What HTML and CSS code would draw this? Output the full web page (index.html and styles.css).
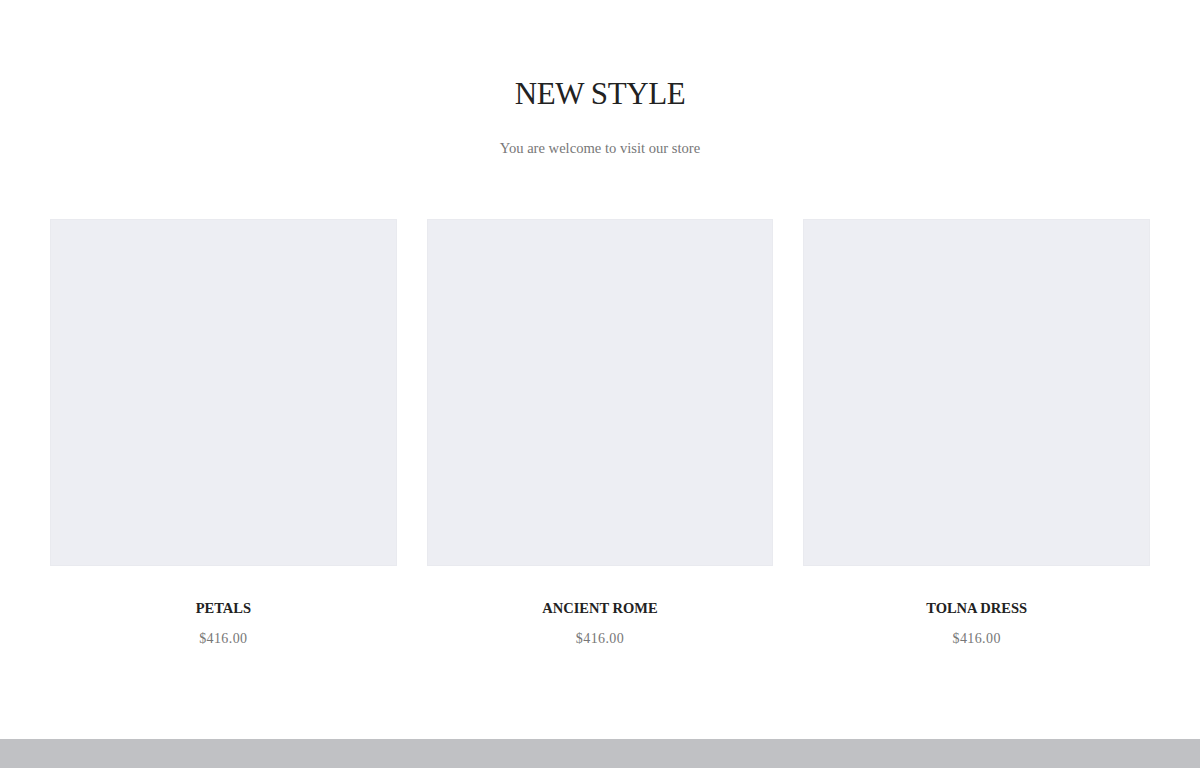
FILE: index.html
```html
<!DOCTYPE html>
<html lang="en">
<head>
  <meta charset="UTF-8">
  <title>New Style</title>
  <meta name="viewport" content="width=device-width, initial-scale=1">
  <link rel="stylesheet" href="styles.css">
</head>
<body>
  <section class="collection">
    <div class="collection-head">
      <h2>NEW STYLE</h2>
      <p>You are welcome to visit our store</p>
    </div>

    <div class="product-grid">
      <div class="product">
        <div class="product-img"></div>
        <h3>PETALS</h3>
        <span class="price">$416.00</span>
      </div>
      <div class="product">
        <div class="product-img"></div>
        <h3>ANCIENT ROME</h3>
        <span class="price">$416.00</span>
      </div>
      <div class="product">
        <div class="product-img"></div>
        <h3>TOLNA DRESS</h3>
        <span class="price">$416.00</span>
      </div>
    </div>
  </section>

  <footer class="site-footer"></footer>
</body>
</html>
```

FILE: styles.css
```css
* {
  box-sizing: border-box;
  font-family: 'Liberation Serif', 'Times New Roman', serif;
}
body {
  margin: 0;
  padding: 0;
  background: #fff;
  color: #222;
}
.collection {
  padding: 76px 50px 0;
  height: 739px;
}
.collection-head {
  text-align: center;
}
.collection-head h2 {
  margin: 0;
  font-size: 31px;
  font-weight: normal;
  line-height: 36px;
  letter-spacing: -0.4px;
  color: #222;
}
.collection-head p {
  margin: 26px 0 0;
  font-size: 14.6px;
  line-height: 20px;
  color: #777;
}
.product-grid {
  display: grid;
  grid-template-columns: repeat(3, 1fr);
  gap: 30px;
  margin-top: 61px;
}
.product {
  text-align: center;
}
.product-img {
  aspect-ratio: 1 / 1;
  background: #edeef3;
  border: 1px solid #e9eaef;
}
.product h3 {
  margin: 32px 0 0;
  font-size: 14.5px;
  font-weight: bold;
  line-height: 20px;
  color: #222;
}
.price {
  display: block;
  margin-top: 11px;
  font-size: 14px;
  line-height: 20px;
  letter-spacing: 0.4px;
  color: #777;
}
.site-footer {
  height: 29px;
  background: #c0c1c4;
}
```
